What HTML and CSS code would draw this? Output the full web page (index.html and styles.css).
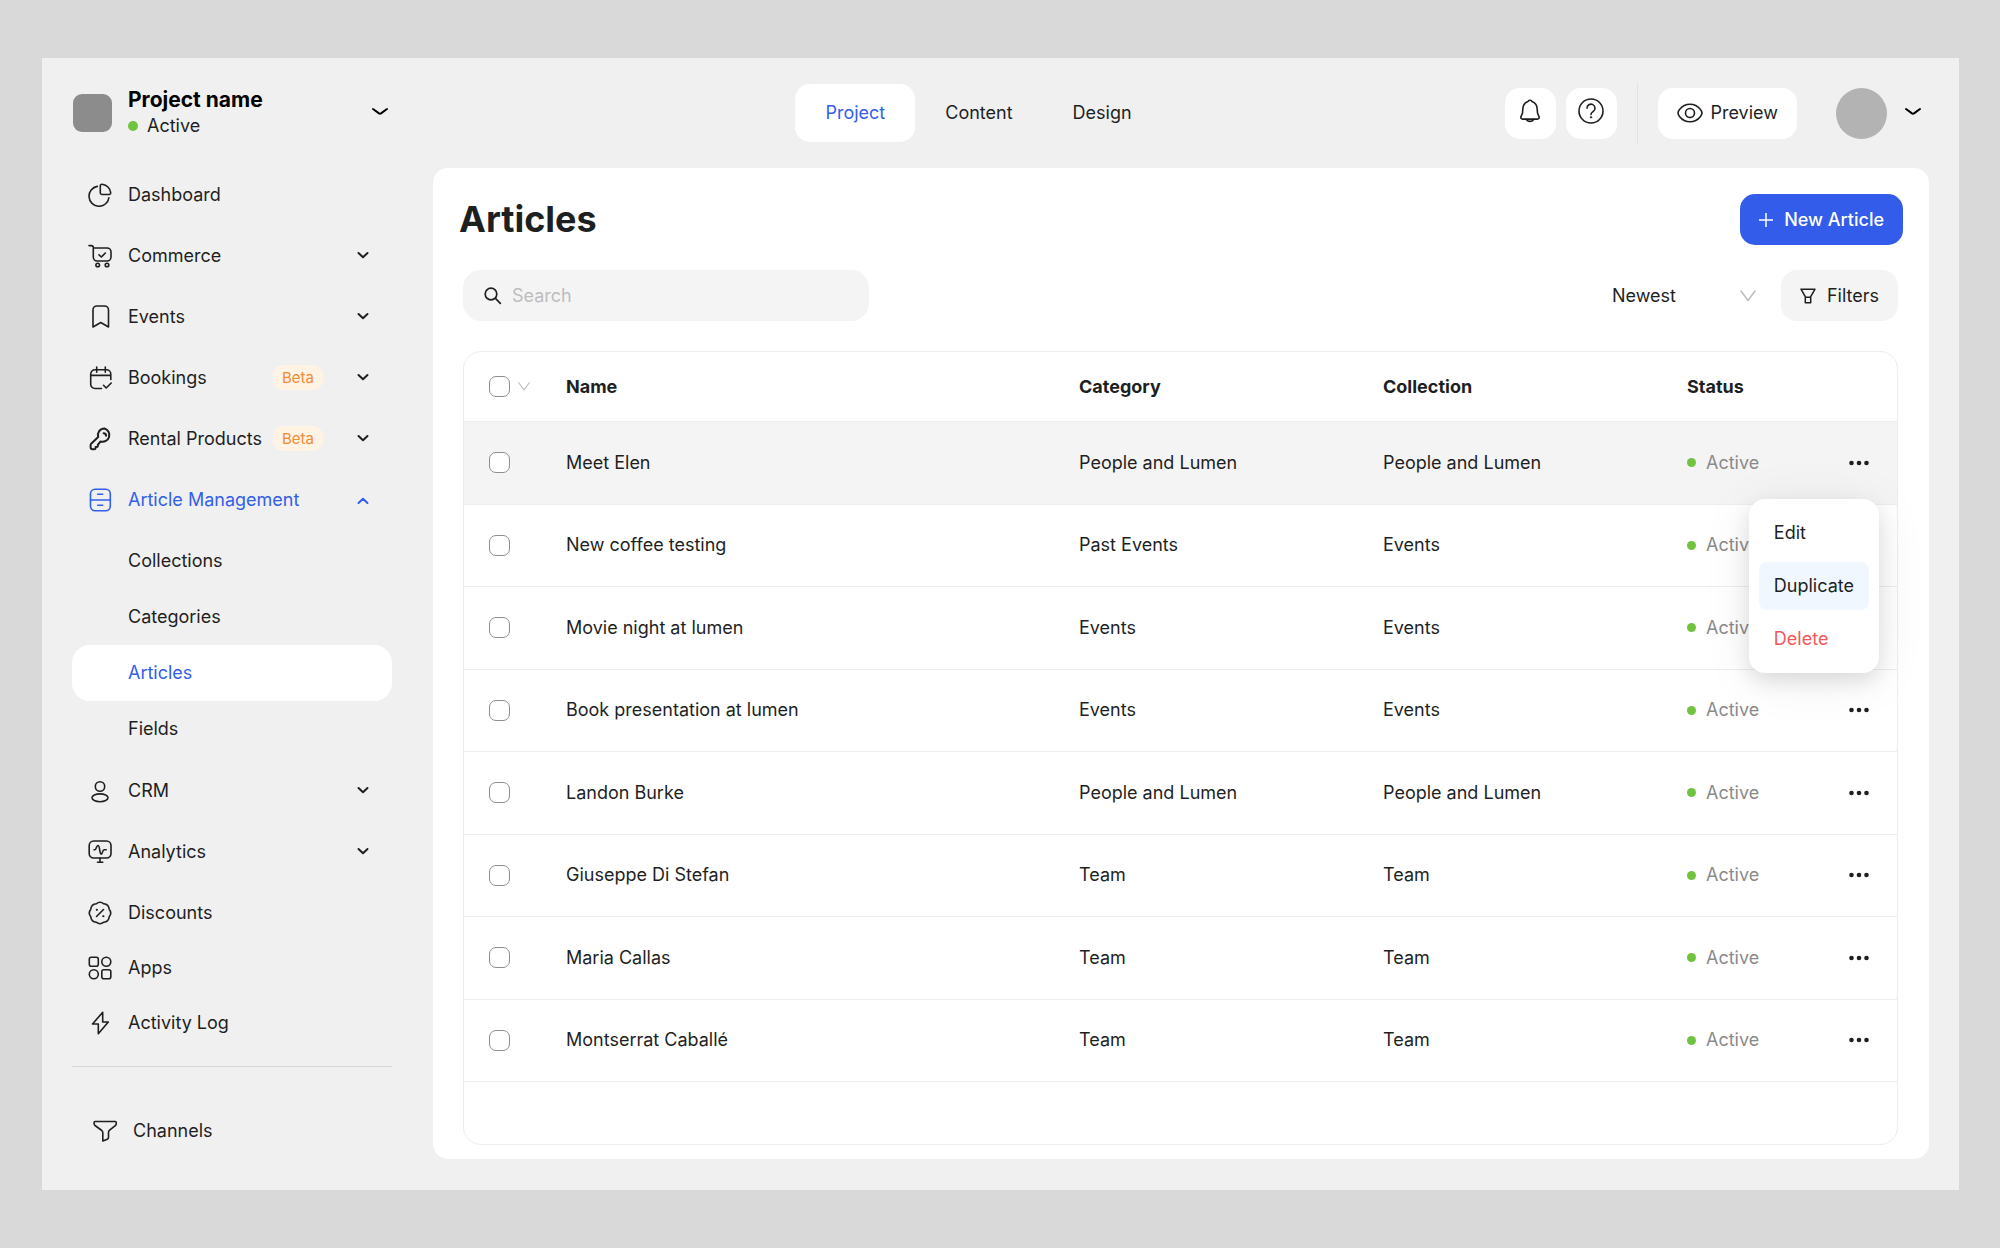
FILE: index.html
```html
<!DOCTYPE html>
<html lang="en">
<head>
<meta charset="utf-8">
<meta name="viewport" content="width=device-width, initial-scale=1">
<title>Articles</title>
<link rel="stylesheet" href="styles.css">
</head>
<body>
<svg class="defs" aria-hidden="true">
  <symbol id="chev" viewBox="0 0 12 12"><path d="M1.500 3 6 7.300 10.500 3"/></symbol>
  <symbol id="chev-wide" viewBox="0 0 16 12"><path d="M1 2 7 6.400q1 .6 2 0L15 2"/></symbol>
  <symbol id="dots" viewBox="0 0 20 6"><circle cx="2.500" cy="3" r="2.300"/><circle cx="10" cy="3" r="2.300"/><circle cx="17.500" cy="3" r="2.300"/></symbol>
</svg>

<div class="app">
  <header class="topbar">
    <button class="project" type="button">
      <span class="project-logo"></span>
      <span class="project-text">
        <span class="project-name">Project name</span>
        <span class="project-status"><span class="dot dot-large"></span>Active</span>
      </span>
      <svg class="chev-wide"><use href="#chev-wide"/></svg>
    </button>

    <nav class="tabs" aria-label="Sections">
      <a class="tab tab-active" href="#project">Project</a>
      <a class="tab" href="#content">Content</a>
      <a class="tab" href="#design">Design</a>
    </nav>

    <div class="actions">
      <button class="square" type="button" aria-label="Notifications">
        <svg class="icon" viewBox="0 0 24 24"><path d="M12 1.2a2 2 0 0 1 2 1.4c3.3 1.1 5 3.8 5.2 7.4l.3 4 1.5 3.6c.5 1.3-.2 2.5-1.6 2.5H4.6c-1.4 0-2.1-1.2-1.6-2.5L4.500 14l.3-4C5 6.400 6.700 3.700 10 2.600a2 2 0 0 1 2-1.400z"/><path d="M8.400 20.200a3.800 3.200 0 0 0 7.200 0"/></svg>
      </button>
      <button class="square" type="button" aria-label="Help">
        <svg class="icon icon-26" viewBox="0 0 26 26"><circle cx="13" cy="13" r="12"/><path d="M9 10.300a4 4 0 1 1 6.200 3.200c-1.500 1-2.200 1.400-2.200 3"/><circle class="fill" cx="13" cy="19.300" r=".7"/></svg>
      </button>
      <span class="rule"></span>
      <button class="preview" type="button">
        <svg class="icon icon-26" viewBox="0 0 26 26"><path d="M1 13c0-1.500.6-2.400 1.700-3.700C4.900 6.500 8.500 4.200 13 4.200s8.100 2.300 10.300 5.100C24.400 10.600 25 11.500 25 13s-.6 2.400-1.700 3.700c-2.200 2.800-5.800 5.100-10.300 5.100s-8.100-2.300-10.300-5.100C1.600 15.400 1 14.500 1 13z"/><circle cx="13" cy="13" r="4.500"/></svg>
        Preview
      </button>
      <button class="account" type="button" aria-label="Account">
        <span class="avatar"></span>
        <svg class="chev-wide"><use href="#chev-wide"/></svg>
      </button>
    </div>
  </header>

  <div class="body">
    <aside class="sidebar">
      <nav aria-label="Main">
        <ul class="menu">
          <li class="spaced"><a class="item" href="#dashboard">
            <svg class="icon" viewBox="0 0 24 24"><path d="M9.300 3.400A10 10 0 1 0 20.900 14.800"/><path d="M12.300 2.700c0-1 .8-1.600 1.800-1.500 4.400.7 7.900 4.100 8.600 8.500.1 1-.6 1.800-1.600 1.800h-7a1.800 1.800 0 0 1-1.800-1.800z"/></svg>
            <span class="label">Dashboard</span></a></li>
          <li class="spaced"><a class="item" href="#commerce">
            <svg class="icon" viewBox="0 0 24 24"><path d="M1 1.600h2.300C4.600 1.600 5.300 2.400 5.300 3.600V13a4 4 0 0 0 4 4H19a4 4 0 0 0 4-4V8a4 4 0 0 0-4-4H5.300"/><path d="m11 10.800 2.400 2.200L17.300 9"/><circle cx="9.700" cy="21" r="1.800"/><circle cx="19" cy="21" r="1.800"/></svg>
            <span class="label">Commerce</span><svg class="chev"><use href="#chev"/></svg></a></li>
          <li class="spaced"><a class="item" href="#events">
            <svg class="icon" viewBox="0 0 24 24"><path d="M5 22V5a4 4 0 0 1 4-4h7.500a4 4 0 0 1 4 4v17l-7.750-4.500z"/></svg>
            <span class="label">Events</span><svg class="chev"><use href="#chev"/></svg></a></li>
          <li class="spaced"><a class="item" href="#bookings">
            <svg class="icon" viewBox="0 0 24 24"><path d="M13.500 22.500H7A4.300 4.300 0 0 1 2.700 18.200V8A4.300 4.300 0 0 1 7 3.700h11.500A4.300 4.300 0 0 1 22.800 8v5.500M2.700 9.400h20.100M8.700 1v5.200M17.300 1v5.200M15.500 19.300l2.700 2.700 5-5"/></svg>
            <span class="label">Bookings</span><span class="beta">Beta</span><svg class="chev"><use href="#chev"/></svg></a></li>
          <li class="spaced"><a class="item" href="#rental">
            <svg class="icon icon-bold" viewBox="0 0 24 24"><path d="M16.500 1.500a6.600 6.600 0 0 0-6.300 8.600L3.400 16.400c-.5.500-.8 1-.8 1.700v2.200a2 2 0 0 0 2 2h1.600c.8 0 1.400-.5 1.400-1.300v-.9h1c.8 0 1.300-.5 1.300-1.300v-1.100l2.700-3.200a6.600 6.600 0 1 0 3.900-13z"/><path d="M15.600 6.300c1.500 0 2.500 1 2.500 2.500"/></svg>
            <span class="label">Rental Products</span><span class="beta">Beta</span><svg class="chev"><use href="#chev"/></svg></a></li>
          <li class="spaced"><a class="item item-open" href="#articles" aria-expanded="true">
            <svg class="icon" viewBox="0 0 24 24"><rect x="2.500" y="1.300" width="19.800" height="21.400" rx="4.500"/><path d="M2.500 12h19.800M9.700 6.300h5M9.700 17.200h5"/></svg>
            <span class="label">Article Management</span><svg class="chev chev-up"><use href="#chev"/></svg></a></li>
          <li><a class="item sub" href="#collections">Collections</a></li>
          <li><a class="item sub" href="#categories">Categories</a></li>
          <li><a class="item sub sub-current" href="#articles" aria-current="page">Articles</a></li>
          <li class="spaced"><a class="item sub" href="#fields">Fields</a></li>
          <li class="spaced"><a class="item" href="#crm">
            <svg class="icon" viewBox="0 0 24 24"><circle cx="12" cy="7.500" r="4.700"/><ellipse cx="12" cy="18.800" rx="8" ry="3.900"/></svg>
            <span class="label">CRM</span><svg class="chev"><use href="#chev"/></svg></a></li>
          <li class="spaced"><a class="item" href="#analytics">
            <svg class="icon" viewBox="0 0 24 24"><rect x="1.200" y="1" width="21.800" height="17" rx="4.500"/><path d="M12 18v4.300M9.500 22.300h5.300M6 9.800h.8c1.500 0 1.500-4.300 3.200-4.300 2.200 0 1.200 8.600 3.200 8.600 1.600 0 1-4.300 3-4.300h2"/></svg>
            <span class="label">Analytics</span><svg class="chev"><use href="#chev"/></svg></a></li>
          <li><a class="item" href="#discounts">
            <svg class="icon" viewBox="0 0 24 24"><path d="M21.200 8.200A6 6 0 0 1 21.200 15.800 6 6 0 0 1 15.800 21.200 6 6 0 0 1 8.200 21.200 6 6 0 0 1 2.800 15.800 6 6 0 0 1 2.800 8.200 6 6 0 0 1 8.200 2.800 6 6 0 0 1 15.800 2.800 6 6 0 0 1 21.200 8.200z"/><path d="m15.500 8.500-7 7"/><circle class="fill" cx="8.800" cy="8.800" r=".6"/><circle class="fill" cx="15.200" cy="15.200" r=".6"/></svg>
            <span class="label">Discounts</span></a></li>
          <li><a class="item" href="#apps">
            <svg class="icon" viewBox="0 0 24 24"><rect x="1.300" y="1.300" width="9" height="9" rx="2"/><circle cx="18.300" cy="5.800" r="4.500"/><circle cx="5.800" cy="18.300" r="4.500"/><rect x="13.800" y="13.800" width="9" height="9" rx="2"/></svg>
            <span class="label">Apps</span></a></li>
          <li><a class="item" href="#log">
            <svg class="icon" viewBox="0 0 24 24"><path d="M14.700 1.300 4.500 13h5.800v9.800L20.300 11h-5.600z"/></svg>
            <span class="label">Activity Log</span></a></li>
        </ul>
        <ul class="menu menu-extra">
          <li><a class="item item-extra" href="#channels">
            <svg class="icon" viewBox="0 0 24 24"><path d="M2 2.500h20.300c.5 0 .9.400.9.900v1.500c0 .8-.3 1.200-.9 1.700l-5.700 4.600c-.8.700-1.100 1.200-1.100 2.200v5.200c0 .8-.4 1.400-1.200 1.700l-4.500 1.700v-8.300c0-1-.3-1.600-1-2.200L2 6.500c-.6-.5-.9-1-.9-1.700V3.400c0-.5.400-.9.900-.9z"/></svg>
            <span class="label">Channels</span></a></li>
        </ul>
      </nav>
    </aside>

    <main class="card">
      <div class="row title-row">
        <h1>Articles</h1>
        <button class="new" type="button"><svg class="plus" viewBox="0 0 14 14"><path d="M7 0v14M0 7h14"/></svg>New Article</button>
      </div>

      <div class="row tools">
        <label class="search">
          <svg class="search-icon" viewBox="0 0 18 18"><circle cx="7" cy="7" r="5.800"/><path d="m11.200 11.200 5.600 5.600"/></svg>
          <input type="search" placeholder="Search" aria-label="Search articles">
        </label>
        <div class="tools-right">
          <div class="sort">
            <select aria-label="Sort order"><option>Newest</option><option>Oldest</option></select>
            <svg class="vee" viewBox="0 0 16 12"><path d="m1 1 7 9.500L15 1"/></svg>
          </div>
          <button class="filters" type="button"><svg class="funnel" viewBox="0 0 16 16"><path d="M1 1.200h14l-4.300 7.500v6H5.300v-6zM5.300 9.300h5.400"/></svg>Filters</button>
        </div>
      </div>

      <div class="table-box">
        <table>
          <colgroup><col class="c-check"><col><col class="c-text"><col class="c-text"><col class="c-status"><col class="c-more"></colgroup>
          <thead>
            <tr>
              <th><span class="check-all"><input type="checkbox" aria-label="Select all"><svg class="vee vee-small" viewBox="0 0 16 12"><path d="m1 1 7 9.500L15 1"/></svg></span></th>
              <th scope="col">Name</th><th scope="col">Category</th><th scope="col">Collection</th><th scope="col">Status</th><th></th>
            </tr>
          </thead>
          <tbody>
            <tr class="hovered">
              <td><input type="checkbox" aria-label="Select Meet Elen"></td><td>Meet Elen</td><td>People and Lumen</td><td>People and Lumen</td>
              <td><span class="status"><span class="dot"></span>Active</span></td>
              <td><div class="more-wrap"><button class="more" type="button" aria-label="More"><svg><use href="#dots"/></svg></button>
                <div class="popup" role="menu">
                  <button type="button" role="menuitem">Edit</button>
                  <button class="popup-current" type="button" role="menuitem">Duplicate</button>
                  <button class="popup-danger" type="button" role="menuitem">Delete</button>
                </div></div></td>
            </tr>
            <tr>
              <td><input type="checkbox" aria-label="Select New coffee testing"></td><td>New coffee testing</td><td>Past Events</td><td>Events</td>
              <td><span class="status"><span class="dot"></span>Active</span></td>
              <td><button class="more" type="button" aria-label="More"><svg><use href="#dots"/></svg></button></td>
            </tr>
            <tr>
              <td><input type="checkbox" aria-label="Select Movie night at lumen"></td><td>Movie night at lumen</td><td>Events</td><td>Events</td>
              <td><span class="status"><span class="dot"></span>Active</span></td>
              <td><button class="more" type="button" aria-label="More"><svg><use href="#dots"/></svg></button></td>
            </tr>
            <tr>
              <td><input type="checkbox" aria-label="Select Book presentation at lumen"></td><td>Book presentation at lumen</td><td>Events</td><td>Events</td>
              <td><span class="status"><span class="dot"></span>Active</span></td>
              <td><button class="more" type="button" aria-label="More"><svg><use href="#dots"/></svg></button></td>
            </tr>
            <tr>
              <td><input type="checkbox" aria-label="Select Landon Burke"></td><td>Landon Burke</td><td>People and Lumen</td><td>People and Lumen</td>
              <td><span class="status"><span class="dot"></span>Active</span></td>
              <td><button class="more" type="button" aria-label="More"><svg><use href="#dots"/></svg></button></td>
            </tr>
            <tr>
              <td><input type="checkbox" aria-label="Select Giuseppe Di Stefan"></td><td>Giuseppe Di Stefan</td><td>Team</td><td>Team</td>
              <td><span class="status"><span class="dot"></span>Active</span></td>
              <td><button class="more" type="button" aria-label="More"><svg><use href="#dots"/></svg></button></td>
            </tr>
            <tr>
              <td><input type="checkbox" aria-label="Select Maria Callas"></td><td>Maria Callas</td><td>Team</td><td>Team</td>
              <td><span class="status"><span class="dot"></span>Active</span></td>
              <td><button class="more" type="button" aria-label="More"><svg><use href="#dots"/></svg></button></td>
            </tr>
            <tr>
              <td><input type="checkbox" aria-label="Select Montserrat Caballé"></td><td>Montserrat Caballé</td><td>Team</td><td>Team</td>
              <td><span class="status"><span class="dot"></span>Active</span></td>
              <td><button class="more" type="button" aria-label="More"><svg><use href="#dots"/></svg></button></td>
            </tr>
          </tbody>
        </table>
      </div>
    </main>
  </div>
</div>
</body>
</html>
```
FILE: styles.css
```css
:root {
  --ink: #1e1f1f;
  --blue: #335eea;
  --line: #ededed;
  --soft: #f4f4f4;
}

* { box-sizing: border-box; }

body {
  margin: 0;
  padding: 58px 41px 59px 42px;
  background: #d9d9d9;
  color: var(--ink);
  font: 400 18px/24px Inter, "Liberation Sans", sans-serif;
}

button, input, select { font: inherit; color: inherit; }
button { padding: 0; border: 0; background: none; cursor: pointer; }
a { color: inherit; text-decoration: none; }
svg { flex: none; fill: none; stroke: currentColor; stroke-linecap: round; stroke-linejoin: round; }
.defs { display: none; }
.icon { width: 24px; height: 24px; stroke-width: 1.6; }
.icon-26 { width: 26px; height: 26px; }
.icon-bold { stroke-width: 2; }
.fill { fill: currentColor; stroke-width: 1; }
.chev { width: 12px; height: 12px; stroke-width: 2; }
.chev-up { transform: rotate(180deg); }
.chev-wide { width: 16px; height: 12px; stroke-width: 2; color: #000; }
.dot { flex: none; width: 9px; height: 9px; border-radius: 50%; background: #71c23f; }
.dot-large { width: 10px; height: 10px; }

.app { padding: 0 30px 31px; background: #f0f0f0; }

/* top bar */
.topbar {
  display: grid;
  grid-template-columns: 320px 20fr auto 17fr auto;
  align-items: center;
  height: 110px;
  padding-right: 8px;
}
.tabs { grid-column: 3; }
.actions { grid-column: 5; }

.project { display: flex; align-items: center; padding-right: 4px; text-align: left; }
.project-logo { width: 39px; height: 38px; margin: 0 16px 0 1px; border-radius: 9px; background: #8c8c8c; }
.project-text { display: grid; flex: 1; gap: 2px; }
.project-name { color: #000; font-size: 21px; font-weight: 700; }
.project-status { display: flex; align-items: center; gap: 9px; }

.tabs { display: flex; }
.tab { padding: 17px 30px; border-radius: 15px; }
.tab-active { background: #fff; color: var(--blue); }

.actions { display: flex; align-items: center; }
.square {
  display: grid;
  place-items: center;
  width: 51px;
  height: 51px;
  margin-right: 10px;
  padding-bottom: 5px;
  border-radius: 15px;
  background: #fff;
}
.rule { width: 1px; height: 61px; margin: 0 20px 0 10px; background: #e2e2e2; }
.preview {
  display: flex;
  align-items: center;
  gap: 8px;
  height: 51px;
  padding: 0 19px;
  border-radius: 15px;
  background: #fff;
}
.account { display: flex; align-items: center; gap: 18px; margin-left: 39px; }
.avatar { width: 51px; height: 51px; border-radius: 50%; background: #b3b3b3; }

/* layout */
.body { display: grid; grid-template-columns: 320px 1fr; gap: 41px; }

/* sidebar */
.sidebar { margin-top: -1px; }
.menu { margin: 0; padding: 0 0 16px; list-style: none; }
.spaced { margin-bottom: 6px; }
.item { display: flex; align-items: center; height: 55px; padding: 0 23px 0 16px; border-radius: 18px; }
.label { flex: 1; margin-left: 16px; }
.item-open { color: var(--blue); }
.sub { height: 56px; padding-left: 56px; }
.sub-current { background: #fff; color: var(--blue); }
.beta {
  margin-right: 34px;
  padding: 0 9px;
  border-radius: 10px;
  background: #fff4e4;
  color: #f08c35;
  font-size: 15px;
  line-height: 25px;
}
.menu-extra { padding: 36px 0 0; border-top: 1px solid #d9d9d9; }
.item-extra { padding-left: 21px; }

/* content card */
.card { padding: 26px 26px 14px; border-radius: 15px; background: #fff; }
.row { display: flex; align-items: center; justify-content: space-between; padding: 0 5px 0 4px; }
.title-row { padding: 0; margin-bottom: 25px; }
h1 { margin: 0; font-size: 36px; line-height: 51px; font-weight: 700; }
.new {
  display: flex;
  align-items: center;
  gap: 11px;
  height: 51px;
  padding: 0 19px;
  border-radius: 15px;
  background: #325ce9;
  color: #fff;
  font-weight: 500;
}
.plus { width: 14px; height: 14px; stroke-width: 1.5; stroke-linecap: butt; }

.tools { margin-bottom: 30px; }
.search {
  display: flex;
  align-items: center;
  gap: 10px;
  flex: 0 1 406px;
  height: 51px;
  padding: 0 21px;
  border-radius: 18px;
  background: var(--soft);
}
.search-icon { width: 18px; height: 18px; stroke-width: 1.7; stroke-linecap: butt; }
.search input { flex: 1; min-width: 0; padding: 0; border: 0; outline: 0; background: none; }
.search input::placeholder { color: #bdbdbd; opacity: 1; }

.tools-right { display: flex; align-items: center; gap: 15px; }
.sort { display: flex; align-items: center; width: 169px; }
.sort select { flex: 1; width: 100%; height: 51px; margin-right: -26px; padding: 0 36px 0 15px; border: 0; background: none; appearance: none; }
.vee { width: 16px; height: 12px; margin-right: 10px; color: #bdbdbd; stroke-width: 1.5; pointer-events: none; }
.filters {
  display: flex;
  align-items: center;
  gap: 11px;
  height: 51px;
  padding: 0 19px;
  border-radius: 16px;
  background: var(--soft);
}
.funnel { width: 16px; height: 16px; stroke-width: 1.5; }

/* table */
.table-box { margin: 0 5px 0 4px; padding-bottom: 62px; border: 1px solid var(--line); border-radius: 18px; }
table { width: 100%; height: 730px; border-collapse: separate; border-spacing: 0; table-layout: fixed; }
.c-check { width: 102px; }
.c-text { width: 304px; }
.c-status { width: 131px; }
.c-more { width: 79px; }
th, td { padding: 0; border-bottom: 1px solid var(--line); text-align: left; vertical-align: middle; }
th { height: 70px; font-weight: 700; }
th:first-child, td:first-child { padding-left: 25px; }
.hovered td { background: var(--soft); }

input[type="checkbox"] {
  display: block;
  width: 21px;
  height: 21px;
  margin: 0;
  border: 1px solid #8e8e8e;
  border-radius: 7px;
  background: #fff;
  appearance: none;
}
.check-all { display: flex; align-items: center; gap: 8px; }
.vee-small { width: 12px; height: 9px; margin: 0; }

.status { display: flex; align-items: center; gap: 10px; color: #8a8a8a; }
.more { display: block; padding: 9px 0; }
.more svg { display: block; width: 20px; height: 6px; fill: var(--ink); stroke: none; }
td .more { margin-left: 31px; }

/* row menu */
.more-wrap { position: relative; }
.popup {
  position: absolute;
  z-index: 1;
  top: 48px;
  right: 18px;
  display: grid;
  gap: 5px;
  padding: 10px;
  border-radius: 16px;
  background: #fff;
  box-shadow: 0 8px 20px rgba(0, 0, 0, .1), 0 6px 50px rgba(0, 0, 0, .08);
}
.popup button { height: 48px; padding: 0 15px; border-radius: 8px; text-align: left; }
.popup .popup-current { background: #f0f7ff; }
.popup .popup-danger { color: #f0595b; }
```
